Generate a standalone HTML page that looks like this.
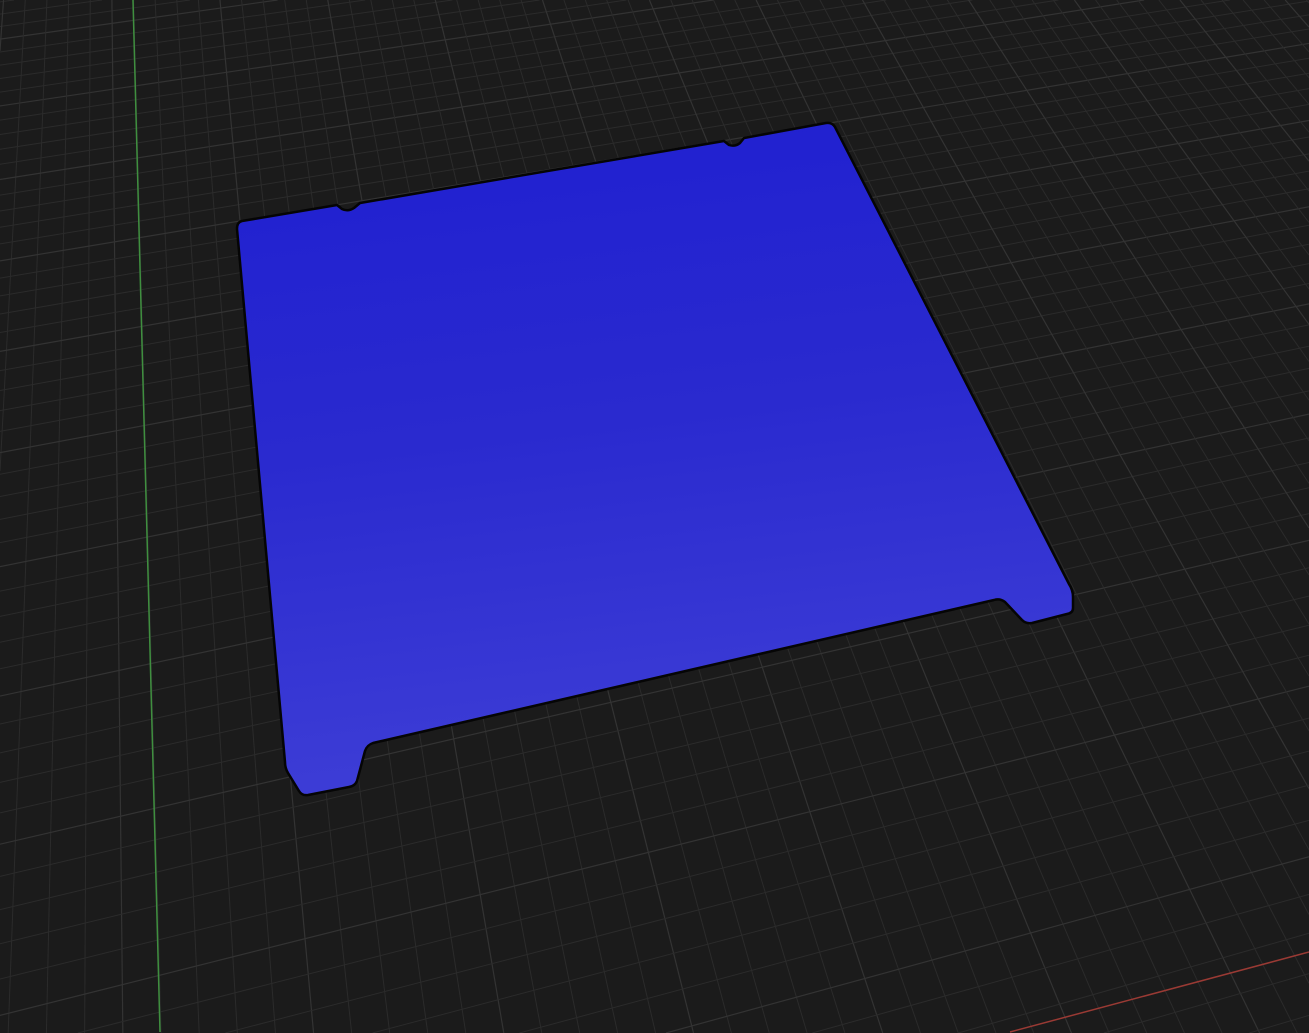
<!DOCTYPE html>
<html><head><meta charset="utf-8"><style>
html,body{margin:0;padding:0;background:#1b1b1b;overflow:hidden;width:1309px;height:1033px}
#wrap{position:relative;width:1309px;height:1033px;overflow:hidden}
svg{display:block;overflow:hidden}
</style></head><body>
<div id="wrap">
<svg id="s" width="1309" height="1033" viewBox="0 0 1309 1033" xmlns="http://www.w3.org/2000/svg">
<defs>
<linearGradient id="g" x1="0" y1="0" x2="0.15" y2="1">
<stop offset="0" stop-color="#1f1fd0"/>
<stop offset="0.5" stop-color="#2a2acf"/>
<stop offset="1" stop-color="#3d3dd6"/>
</linearGradient>
</defs>
<rect width="1309" height="1033" fill="#1b1b1b"/>
<g id="grid"></g>
<path d="M242,221 L337,205 L342,209 Q348,212 354,208 L360,203 L724,141 L729,145 Q735,147 740,143 L744,138 L826,123 Q832,122 835,127 L1069,584 Q1073,590 1073,597 L1073,608 Q1073,613 1067,614 L1032,623 Q1026,624 1022,620 L1005,602 Q1000,598 994,600 L373,743 Q367,745 365,751 L357,781 Q355,786 349,787 L308,795 Q302,796 299,791 L288,773 Q285,768 285,762 L237,229 Q237,222 242,221 Z" fill="url(#g)" stroke="#050505" stroke-width="2.5" stroke-linejoin="round"/>
</svg>
</div>
<script>
(function(){
var W=1309,H=1033;
var src=[[0,0],[1,0],[1,1],[0,1]],dst=[[240,221],[830,123],[1073,612],[292,795]];
var A=[],b=[];
for(var i=0;i<4;i++){var x=src[i][0],y=src[i][1],X=dst[i][0],Y=dst[i][1];
A.push([x,y,1,0,0,0,-X*x,-X*y]);b.push(X);
A.push([0,0,0,x,y,1,-Y*x,-Y*y]);b.push(Y);}
var n=8;for(var c=0;c<n;c++){var p=c;for(var r=c+1;r<n;r++)if(Math.abs(A[r][c])>Math.abs(A[p][c]))p=r;
var t=A[c];A[c]=A[p];A[p]=t;t=b[c];b[c]=b[p];b[p]=t;
for(var r=0;r<n;r++)if(r!=c){var f=A[r][c]/A[c][c];for(var k=c;k<n;k++)A[r][k]-=f*A[c][k];b[r]-=f*b[c];}}
var h=[];for(var i=0;i<n;i++)h.push(b[i]/A[i][i]);h.push(1);
function P(u,v){var w=h[6]*u+h[7]*v+1;return [(h[0]*u+h[1]*v+h[2])/w,(h[3]*u+h[4]*v+h[5])/w,w];}
var g=document.getElementById('grid'),ns='http://www.w3.org/2000/svg';
function clip(x0,y0,x1,y1){var t0=0,t1=1,dx=x1-x0,dy=y1-y0;
var pp=[-dx,dx,-dy,dy],qq=[x0,W-x0,y0,H-y0];
for(var i=0;i<4;i++){if(pp[i]==0){if(qq[i]<0)return null;}else{var r=qq[i]/pp[i];if(pp[i]<0){if(r>t1)return null;if(r>t0)t0=r;}else{if(r<t0)return null;if(r<t1)t1=r;}}}
return [x0+t0*dx,y0+t0*dy,x0+t1*dx,y0+t1*dy];}
function line(a,b,col,wd){var c=clip(a[0],a[1],b[0],b[1]);if(!c)return;
var l=document.createElementNS(ns,'line');l.setAttribute('x1',c[0]);l.setAttribute('y1',c[1]);l.setAttribute('x2',c[2]);l.setAttribute('y2',c[3]);l.setAttribute('stroke',col);l.setAttribute('stroke-width',wd);g.appendChild(l);}
var s=1/25.6,lo=-60,hi=90;
for(var k=lo;k<=hi;k++){var u=k*s;var maj=(k%5==0);
var col=maj?'#333333':'#2b2b2b',wd=maj?1.2:1;
var a=P(u,-2.2),bb=P(u,3.2);if(a[2]>0&&bb[2]>0)line(a,bb,col,wd);
var c=P(-2.5,u),d=P(3.5,u);if(c[2]>0&&d[2]>0)line(c,d,col,wd);}
line([133,0],[160,1032],'#3f8f3f',1.5);
line([1010,1032],[1309,952],'#9a3a34',1.5);
})();
</script>
</body></html>
